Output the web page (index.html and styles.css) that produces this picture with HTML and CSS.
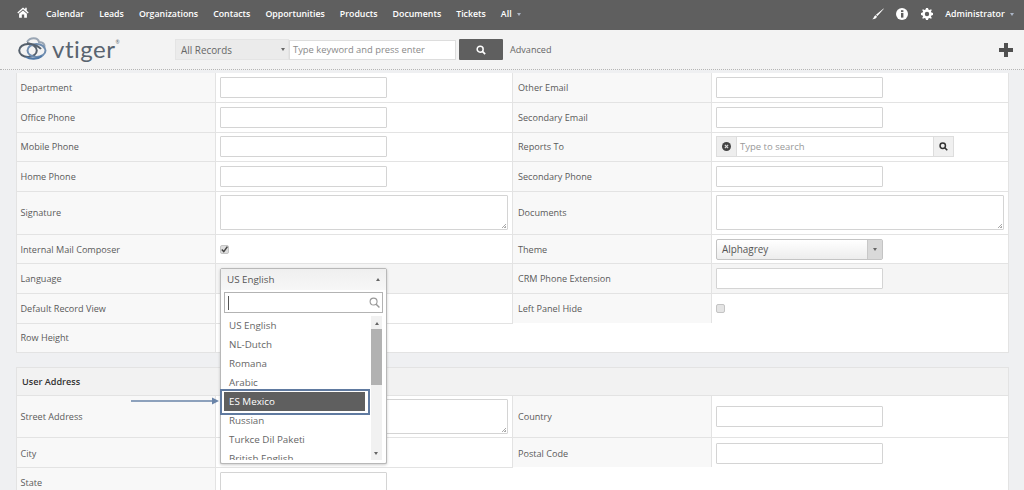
FILE: index.html
```html
<!DOCTYPE html>
<html lang="en">
<head>
<meta charset="utf-8">
<title>vtiger - User Preferences</title>
<link rel="stylesheet" href="styles.css">
</head>
<body>
<nav class="topbar">
  <svg class="home" viewBox="0 0 14 13" width="12" height="11"><path d="M7 0.5 L0.3 6.5 L1.3 7.6 L7 2.6 L12.7 7.6 L13.7 6.5 L11.4 4.4 V1 H9.6 V2.8 Z M2.4 8 V12.6 H5.6 V9 H8.4 V12.6 H11.6 V8 L7 4 Z" fill="#fff"/></svg>
  <div class="menu">
    <a>Calendar</a><a>Leads</a><a>Organizations</a><a>Contacts</a><a>Opportunities</a><a>Products</a><a>Documents</a><a>Tickets</a><a>All <i class="caret"></i></a>
  </div>
  <div class="tools">
    <svg viewBox="0 0 12 12" width="12" height="12"><path d="M11.6 0.4 L11.9 0.8 L5.4 8 L4 6.7 Z M3.6 7.2 L4.9 8.5 C4.6 10.4 2.6 11.4 0.2 11.3 C1.8 10.5 1.9 8 3.6 7.2 Z" fill="#fff"/></svg>
    <svg viewBox="0 0 12 12" width="12" height="12"><circle cx="6" cy="6" r="6" fill="#fff"/><rect x="5" y="5" width="2.4" height="4.6" fill="#5f5f5f"/><rect x="5" y="2.2" width="2.4" height="1.9" fill="#5f5f5f"/></svg>
    <svg viewBox="0 0 12 12" width="12" height="12"><path d="M5 0 H7 L7.4 1.6 L8.6 2.1 L10 1.2 L10.8 2 L9.9 3.4 L10.4 4.6 L12 5 V7 L10.4 7.4 L9.9 8.6 L10.8 10 L10 10.8 L8.6 9.9 L7.4 10.4 L7 12 H5 L4.6 10.4 L3.4 9.9 L2 10.8 L1.2 10 L2.1 8.6 L1.6 7.4 L0 7 V5 L1.6 4.6 L2.1 3.4 L1.2 2 L2 1.2 L3.4 2.1 L4.6 1.6 Z M6 3.8 A2.2 2.2 0 1 0 6 8.2 A2.2 2.2 0 1 0 6 3.8 Z" fill="#fff" fill-rule="evenodd"/></svg>
    <span class="admin">Administrator <i class="caret"></i></span>
  </div>
</nav>
<header class="searchbar">
  <div class="logo">
    <svg viewBox="0 0 29 23" width="29" height="23"><g fill="none" stroke-width="2"><path d="M9 5 C12 0 20 0 21 5 C26 5 28 9 25 11" stroke="#9aa6b4"/><ellipse cx="10" cy="13.5" rx="8.8" ry="6.5" stroke="#55606c"/><ellipse cx="18.5" cy="13.5" rx="9" ry="6.5" stroke="#6f8db0"/><path d="M8 20 C12 22.5 20 22.5 24 19" stroke="#4f78a6"/><path d="M9 6 C13 7 20 8 23 12" stroke="#55606c"/></g></svg>
    <span class="logotext">vtiger<sup>®</sup></span>
  </div>
  <div class="recordsel">All Records <i class="caret dark"></i></div>
  <div class="keyword">Type keyword and press enter</div>
  <button class="gobtn"><svg viewBox="0 0 12 12" width="10" height="10"><circle cx="5" cy="5" r="3.6" fill="none" stroke="#fff" stroke-width="1.8"/><path d="M7.7 7.7 L11 11" stroke="#fff" stroke-width="2"/></svg></button>
  <span class="advanced">Advanced</span>
  <svg class="plus" viewBox="0 0 14 14" width="14" height="14"><path d="M5 0 H9 V5 H14 V9 H9 V14 H5 V9 H0 V5 H5 Z" fill="#505050"/></svg>
</header>
<main class="content">
  <table class="block">
    <colgroup><col class="c1"><col class="c2"><col class="c3"><col class="c4"></colgroup>
    <tr class="r30"><th>Department</th><td><span class="inp"></span></td><th>Other Email</th><td><span class="inp"></span></td></tr>
    <tr class="r30"><th>Office Phone</th><td><span class="inp"></span></td><th>Secondary Email</th><td><span class="inp"></span></td></tr>
    <tr class="r30"><th>Mobile Phone</th><td><span class="inp"></span></td><th>Reports To</th>
      <td><div class="ref">
        <span class="refclear"><svg viewBox="0 0 10 10" width="9" height="9"><circle cx="5" cy="5" r="5" fill="#444"/><path d="M3.2 3.2 L6.8 6.8 M6.8 3.2 L3.2 6.8" stroke="#ddd" stroke-width="1.4"/></svg></span>
        <span class="reftext">Type to search</span>
        <span class="refbtn"><svg viewBox="0 0 12 12" width="9" height="9"><circle cx="5" cy="5" r="3.6" fill="none" stroke="#333" stroke-width="2"/><path d="M7.7 7.7 L11 11" stroke="#333" stroke-width="2.2"/></svg></span>
      </div></td></tr>
    <tr class="r30"><th>Home Phone</th><td><span class="inp"></span></td><th>Secondary Phone</th><td><span class="inp"></span></td></tr>
    <tr class="r43"><th>Signature</th><td><span class="area"></span></td><th>Documents</th><td><span class="area"></span></td></tr>
    <tr class="r30"><th>Internal Mail Composer</th><td><span class="check on"><svg viewBox="0 0 10 10" width="9" height="9"><path d="M2 5 L4.2 7.4 L8.2 1.8" fill="none" stroke="#444" stroke-width="1.7"/></svg></span></td><th>Theme</th>
      <td><div class="themesel"><span class="themetxt">Alphagrey</span><span class="themebtn"><i class="caret dark"></i></span></div></td></tr>
    <tr class="r30 shaded"><th>Language</th><td></td><th>CRM Phone Extension</th><td><span class="inp"></span></td></tr>
    <tr class="r30"><th>Default Record View</th><td></td><th>Left Panel Hide</th><td><span class="check"></span></td></tr>
    <tr class="r30"><th>Row Height</th><td></td><td class="blank" colspan="2"></td></tr>
  </table>
  <table class="block second">
    <colgroup><col class="c1"><col class="c2"><col class="c3"><col class="c4"></colgroup>
    <tr class="head"><th colspan="4">User Address</th></tr>
    <tr class="r42"><th>Street Address</th><td><span class="area"></span></td><th>Country</th><td><span class="inp"></span></td></tr>
    <tr class="r30 nudge"><th>City</th><td><span class="inp"></span></td><th>Postal Code</th><td><span class="inp"></span></td></tr>
    <tr class="r30"><th>State</th><td><span class="inp"></span></td><td class="blank" colspan="2"></td></tr>
  </table>

  <div class="dropdown">
    <div class="ddhead">US English <i class="caret up"></i></div>
    <div class="ddsearch"><span class="cursor"></span><svg viewBox="0 0 12 12" width="11" height="11"><circle cx="5" cy="5" r="3.8" fill="none" stroke="#999" stroke-width="1.2"/><path d="M7.8 7.8 L11.4 11.4" stroke="#999" stroke-width="1.6"/></svg></div>
    <div class="ddbody">
      <ul class="options">
        <li>US English</li><li>NL-Dutch</li><li>Romana</li><li>Arabic</li><li class="sel">ES Mexico</li><li>Russian</li><li>Turkce Dil Paketi</li><li>British English</li>
      </ul>
      <div class="scroll"><i class="caret up"></i><span class="thumb"></span><i class="caret dark bottom"></i></div>
    </div>
  </div>
  <div class="callout"></div>
  <svg class="arrow" viewBox="0 0 88 8" width="88" height="8"><path d="M0 4 H82" stroke="#6a84a8" stroke-width="1.4"/><path d="M81 0.5 L88 4 L81 7.5 Z" fill="#6a84a8"/></svg>
</main>
</body>
</html>
```

FILE: styles.css
```css
* { box-sizing: border-box; }
html, body { margin: 0; height: 100%; overflow: hidden; }
body { font-family: "Open Sans", sans-serif; font-size: 9.1px; color: #555; background: #eff0f2; }
.caret { display: inline-block; width: 0; height: 0; border-left: 2.5px solid transparent; border-right: 2.5px solid transparent; border-top: 3px solid #aab4c4; vertical-align: middle; margin-left: 3px; }
.caret.dark { border-top-color: #666; }
.caret.up { border-top: 0; border-bottom: 3px solid #666; }

.topbar { height: 30px; background: #5f5f5f; display: flex; align-items: center; padding: 0 0 2px 17px; color: #fff; font-size: 8.8px; }
.home { margin-right: 17px; margin-top: -3px; }
.menu { display: flex; gap: 15px; font-weight: 600; }
.menu a { white-space: nowrap; }
.tools { margin-left: auto; display: flex; align-items: center; gap: 12.5px; padding-right: 10px; }
.admin { font-weight: 600; }

.searchbar { height: 40px; background: #f3f3f3; border-bottom: 1px dotted #b5b5b5; display: flex; align-items: center; padding: 0 11px 0 18px; }
.logo { display: flex; align-items: center; width: 157px; gap: 5px; margin-top: -2px; }
.logotext { font-family: "Lato", sans-serif; font-size: 24px; line-height: 26px; color: #596470; letter-spacing: 0.5px; }
.logotext sup { font-size: 5px; vertical-align: 14px; line-height: 0; }
.recordsel { width: 114px; height: 21px; background: #ebebeb; border: 1px solid #e4e4e4; padding: 0 3px 0 5px; display: flex; align-items: center; justify-content: space-between; color: #666; font-size: 9.9px; }
.keyword { width: 167px; height: 20px; background: #fff; border: 1px solid #ddd; line-height: 18px; padding-left: 3px; color: #8a8a8a; font-size: 9.4px; }
.gobtn { width: 44px; height: 21px; margin-left: 3px; background: #5f5f5f; border: 0; border-radius: 1px; padding: 0; display: flex; align-items: center; justify-content: center; }
.advanced { margin-left: 7px; color: #666; }
.plus { margin-left: auto; }

.content { position: relative; height: 420px; overflow: hidden; padding: 3px 16px 0; }
.block { width: 992px; table-layout: fixed; border-collapse: collapse; background: #fff; }
.second { margin-top: 14px; }
.c1 { width: 199px; } .c2 { width: 297px; } .c3 { width: 199px; } .c4 { width: 297px; }
.block th, .block td { border: 1px solid #e3e3e3; padding: 0 0 0 4px; text-align: left; font-weight: 400; vertical-align: middle; }
.block th { background: #f8f8f8; color: #5a5a5a; padding-left: 3.5px; }
.block tr:first-child > * { border-top: 0; }
.r30 { height: 29.6px; }
.r43 { height: 43px; }
.r42 { height: 42px; }
.shaded td { background: #f5f5f5; }
.block td.blank { background: #fff; border-top: hidden; border-left: hidden; }
.head { height: 28px; }
.block .head th { background: #f2f2f2; color: #333; font-weight: 600; padding-left: 5px; border-top: 1px solid #e3e3e3; }
.block th:nth-child(3) { padding-left: 5px; }
.block .nudge > * { padding-top: 1px; }

.inp { display: block; width: 167px; height: 21px; background: #fff; border: 1px solid #d4d4d4; border-radius: 1px; }
.area { display: block; width: 288px; height: 35px; background: #fff; border: 1px solid #d4d4d4; border-radius: 1px; position: relative; }
.area::after { content: ""; position: absolute; right: 1px; bottom: 1px; width: 6px; height: 6px; background: repeating-linear-gradient(135deg, transparent 0 1px, #aaa 1px 2px); clip-path: polygon(100% 0, 100% 100%, 0 100%); }
.check { display: block; width: 9px; height: 9px; background: #e4e4e4; border: 1px solid #c4c4c4; border-radius: 2px; position: relative; }
.check.on { background: #ddd; }
.check svg { position: absolute; left: -1px; top: -1px; }
.ref { display: flex; width: 238px; height: 21px; border: 1px solid #ddd; background: #fff; }
.refclear { width: 20px; background: #eee; border-right: 1px solid #ddd; display: flex; align-items: center; justify-content: center; }
.reftext { flex: 1; padding-left: 3px; line-height: 19px; color: #999; font-size: 9.5px; }
.refbtn { width: 20px; background: #f0f0f0; border-left: 1px solid #ddd; display: flex; align-items: center; justify-content: center; }
.themesel { display: flex; width: 167px; height: 21px; border: 1px solid #c4c4c4; background: linear-gradient(#fff, #ededed); border-radius: 2px; }
.themetxt { flex: 1; padding-left: 5px; line-height: 19px; color: #555; font-size: 9.9px; }
.themebtn { width: 15px; background: #d9d9d9; border-left: 1px solid #c8c8c8; display: flex; align-items: center; justify-content: center; }
.themebtn .caret { margin: 0; }

.dropdown { position: absolute; left: 220px; top: 198px; width: 167px; height: 196px; background: #fff; border: 1px solid #b8b8b8; border-radius: 2px; box-shadow: 0 1px 3px rgba(0,0,0,.2); display: flex; flex-direction: column; font-size: 9.8px; }
.ddhead { height: 21px; margin-bottom: 2px; flex: none; background: linear-gradient(#efefef, #f7f7f7); padding: 0 6px; display: flex; align-items: center; justify-content: space-between; }
.ddsearch { flex: none; margin: 0 3px; height: 21px; border: 1px solid #b3b3b3; display: flex; align-items: center; justify-content: space-between; padding: 0 2px 0 3px; }
.cursor { width: 1px; height: 14px; background: #555; }
.ddbody { flex: 1; min-height: 0; display: flex; overflow: hidden; margin: 3px 0 3px; }
.options { list-style: none; margin: 0; padding: 0 0 0 3px; flex: 1; }
.options li { height: 19px; line-height: 19px; padding-left: 5px; white-space: nowrap; color: #666; }
.options .sel { background: #5f5f5f; color: #fff; width: 141px; }
.scroll { width: 11px; margin-right: 4px; background: #f1f1f1; display: flex; flex-direction: column; align-items: center; position: relative; padding-top: 6px; }
.scroll .caret { margin: 0; }
.thumb { display: block; width: 11px; height: 56px; background: #b2b2b2; margin-top: 4px; }
.scroll .bottom { position: absolute; bottom: 5px; left: 3px; }

.callout { position: absolute; left: 220px; top: 319px; width: 150px; height: 26px; border: 2px solid #607aa0; }
.arrow { position: absolute; left: 131px; top: 327px; }
```
